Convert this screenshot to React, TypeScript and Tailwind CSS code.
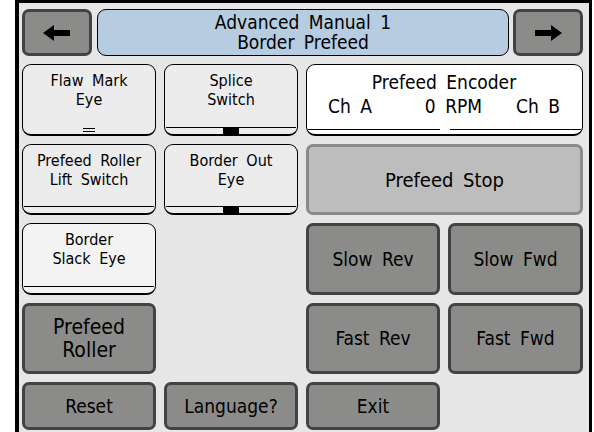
import React from "react"

const font = { fontFamily: '"DejaVu Sans Condensed", "DejaVu Sans", "Liberation Sans", sans-serif' }

type LightProps = {
  lines: string[]
  base?: "none" | "plain" | "block"
  className?: string
}

function Arrow({ dir }: { dir: "left" | "right" }) {
  return (
    <svg width="28" height="16" viewBox="0 0 28 16" className={dir === "right" ? "rotate-180" : ""}>
      <path d="M0 8 L11 0 L11 5 L27 5 L27 11 L11 11 L11 16 Z" fill="#000" />
    </svg>
  )
}

function DarkButton({ children, className = "" }: { children: React.ReactNode; className?: string }) {
  return (
    <div
      className={
        "flex items-center justify-center rounded-[7px] border-[3px] border-[#434343] bg-[#8b8c89] text-center text-[19px] leading-[21px] text-black [word-spacing:4px] " +
        className
      }
    >
      {children}
    </div>
  )
}

function LightButton({ lines, base = "plain", className = "" }: LightProps) {
  return (
    <div className={"relative flex flex-col overflow-hidden rounded-[9px] border border-b-2 border-black bg-[#ececec] " + className}>
      <div className="flex flex-1 flex-col items-center justify-start pt-[6px] text-[16px] leading-[19px] text-black [word-spacing:4px]">
        {lines.map((l) => (
          <span key={l}>{l}</span>
        ))}
      </div>
      {base !== "none" && (
        <div className="relative mx-[1px] h-[7px] border-t border-black">
          {base === "block" && <div className="absolute left-1/2 top-0 h-[7px] w-[16px] -translate-x-1/2 bg-black" />}
        </div>
      )}
      {base === "none" && (
        <div className="absolute bottom-[2px] left-1/2 h-[4px] w-[12px] -translate-x-1/2 border-y border-black" />
      )}
    </div>
  )
}

export default function App() {
  return (
    <div className="h-[432px] w-[594px] bg-white" style={font}>
      <div className="ml-[15px] h-[432px] w-[577px] border-l-4 border-r-[3px] border-t-[3px] border-black bg-[#e6e6e6] pl-[3px] pr-[3px] pt-[6px]">
        <div className="grid grid-cols-[134px_134px_134px_135px] grid-rows-[47px_72px_71px_72px_71px_48px] gap-x-[8px] gap-y-[8px]">
          <DarkButton className="w-[70px]">
            <Arrow dir="left" />
          </DarkButton>
          <div className="col-span-3 flex gap-[4px]">
            <div className="-ml-[67px] flex flex-1 flex-col items-center justify-center rounded-[9px] border border-black bg-[#b6cce0] pb-[1px] text-[19px] leading-[20px] text-black [word-spacing:4px]">
              <span>Advanced Manual 1</span>
              <span>Border Prefeed</span>
            </div>
            <DarkButton className="w-[70px]">
              <Arrow dir="right" />
            </DarkButton>
          </div>

          <LightButton lines={["Flaw Mark", "Eye"]} base="none" />
          <LightButton lines={["Splice", "Switch"]} base="block" />
          <div className="col-span-2 flex flex-col overflow-hidden rounded-[9px] border border-b-2 border-black bg-white">
            <div className="flex flex-1 flex-col pl-[21px] pr-[22px] pt-[5px] text-[19px] leading-[24px] text-black [word-spacing:4px]">
              <span className="text-center">Prefeed Encoder</span>
              <div className="flex">
                <span>Ch A</span>
                <span className="ml-auto mr-[34px]">0 RPM</span>
                <span>Ch B</span>
              </div>
            </div>
            <div className="relative mx-[1px] h-[5px] border-t border-black">
              <div className="absolute left-[132px] top-[-1px] h-[7px] w-[10px] bg-white" />
            </div>
          </div>

          <LightButton lines={["Prefeed Roller", "Lift Switch"]} base="plain" />
          <LightButton lines={["Border Out", "Eye"]} base="block" />
          <div className="col-span-2 flex items-center justify-center rounded-[7px] border-[3px] border-[#8a8a8a] bg-[#bdbdbd] text-[20px] text-black [word-spacing:4px]">
            Prefeed Stop
          </div>

          <LightButton lines={["Border", "Slack Eye"]} base="plain" className="bg-[#f3f3f3]" />
          <div />
          <DarkButton>Slow Rev</DarkButton>
          <DarkButton>Slow Fwd</DarkButton>

          <DarkButton className="flex-col text-[21px] leading-[23px]">
            <span>Prefeed</span>
            <span>Roller</span>
          </DarkButton>
          <div />
          <DarkButton>Fast Rev</DarkButton>
          <DarkButton>Fast Fwd</DarkButton>

          <DarkButton>Reset</DarkButton>
          <DarkButton>Language?</DarkButton>
          <DarkButton>Exit</DarkButton>
          <div />
        </div>
      </div>
    </div>
  )
}
